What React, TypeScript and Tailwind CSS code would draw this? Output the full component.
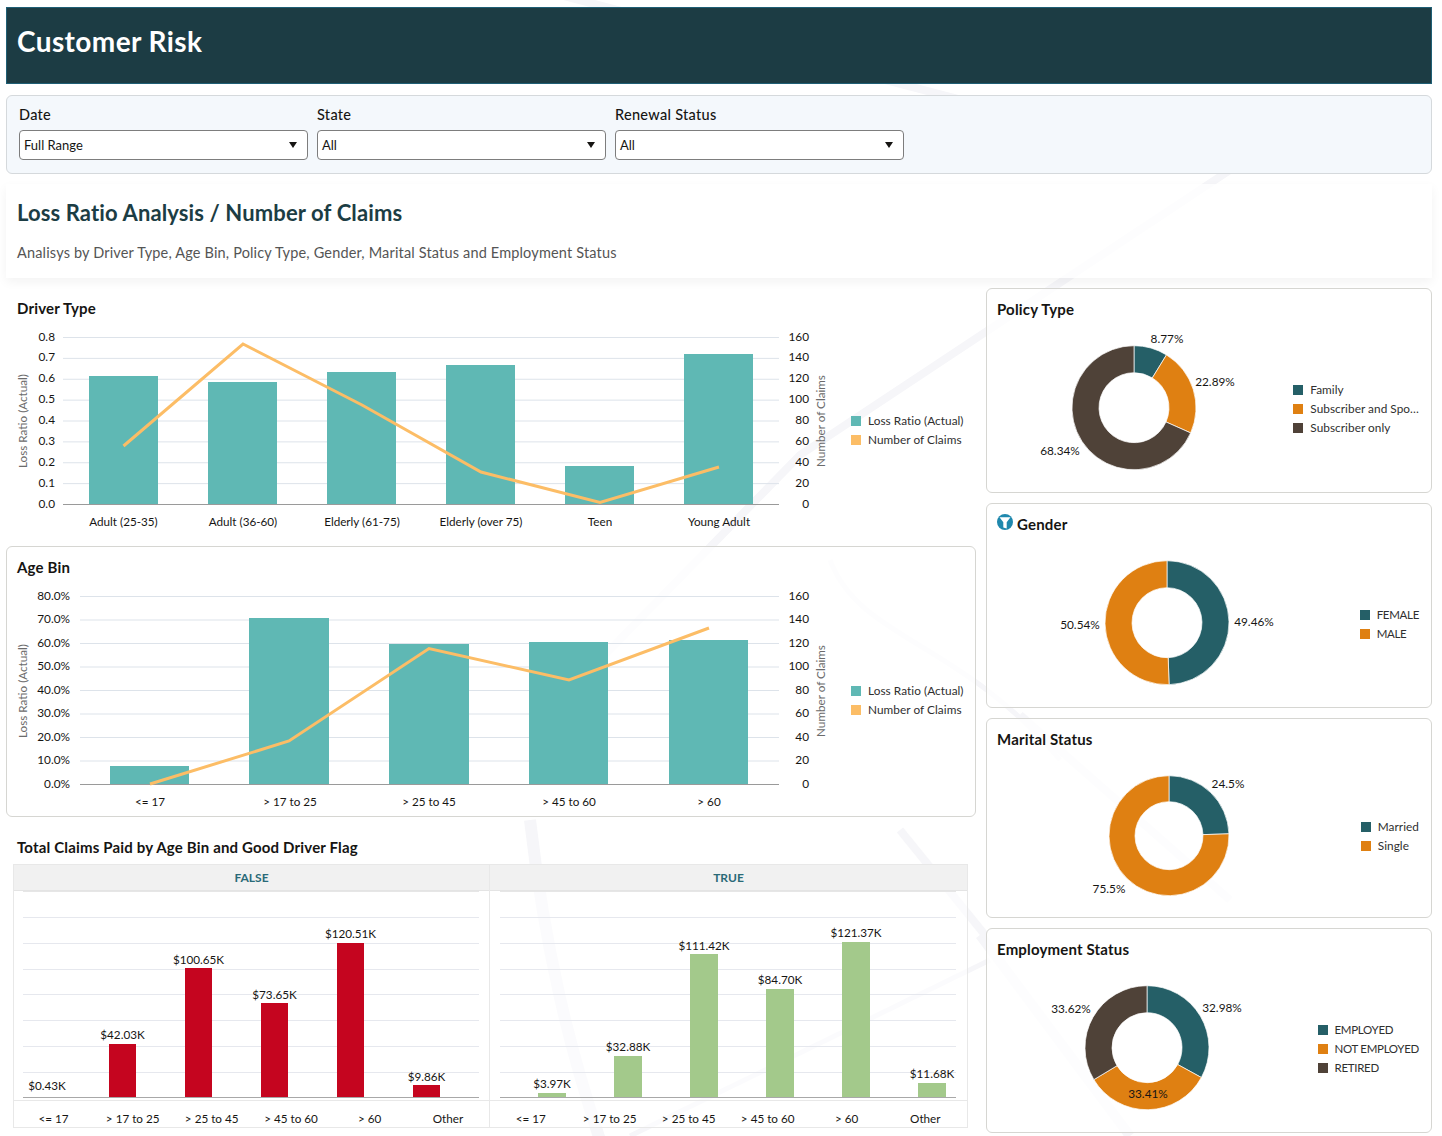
const TEAL = "#255f67";
const ORANGE = "#df8012";
const BROWN = "#4f4238";
const BAR = "#5fb8b4";
const LINE = "#fcbd66";

type Slice = { value: number; color: string };
type Lab = { text: string; x: number; y: number };
type LegendItem = { label: string; color: string };

function Legend({ items, caps }: { items: LegendItem[]; caps?: boolean }) {
  return (
    <div className="flex flex-col">
      {items.map((item) => (
        <div key={item.label} className="flex h-[19px] items-center gap-[7px] text-[#2f2f2f]">
          <span className="h-[10px] w-[10px] shrink-0" style={{ backgroundColor: item.color }} />
          <span className={caps ? "whitespace-nowrap text-[11.5px] tracking-[-0.3px]" : "whitespace-nowrap text-[11.8px] tracking-[0.05px]"}>
            {item.label}
          </span>
        </div>
      ))}
    </div>
  );
}

function Title({ children }: { children: React.ReactNode }) {
  return <h2 className="pb-[1px] text-[15px] font-bold leading-[18px] tracking-[0.17px] text-[#161513]">{children}</h2>;
}

function ComboChart(props: {
  top: number;
  height: number;
  axisLeft: number;
  yLabels: string[];
  yTop: number;
  yBottom: number;
  labelX: number;
  leftTitleY: number;
  rightTitleY: number;
  bars: { x: number; w: number; top: number }[];
  line: number[][];
  cats: { text: string; x: number }[];
  catY: number;
}) {
  const { top, height, axisLeft, yLabels, yTop, yBottom, labelX, bars, line, cats, catY } = props;
  const rightLabels = ["160", "140", "120", "100", "80", "60", "40", "20", "0"];
  const step = (yBottom - yTop) / 8;
  return (
    <svg viewBox={`6 ${top} 830 ${height}`} width={830} height={height} className="block shrink-0">
      {yLabels.map((l, i) => (
        <g key={l}>
          {i < 8 && <line x1={axisLeft} x2={779} y1={yTop + i * step} y2={yTop + i * step} stroke="#dde3ea" />}
          <text x={labelX} y={yTop + i * step + 3} textAnchor="end" className="fill-[#161513] text-[11.8px]">
            {l}
          </text>
          <text x={809} y={yTop + i * step + 3} textAnchor="end" className="fill-[#161513] text-[11.8px]">
            {rightLabels[i]}
          </text>
        </g>
      ))}
      {bars.map((b) => (
        <rect key={b.x} x={b.x} y={b.top} width={b.w} height={yBottom - b.top} fill={BAR} />
      ))}
      <line x1={axisLeft} x2={779} y1={yBottom} y2={yBottom} stroke="#9a9a9a" />
      <polyline points={line.map((p) => p.join(",")).join(" ")} fill="none" stroke={LINE} strokeWidth={3} />
      {cats.map((c) => (
        <text key={c.text} x={c.x} y={catY} textAnchor="middle" className="fill-[#161513] text-[11.7px]">
          {c.text}
        </text>
      ))}
      <text
        transform={`rotate(-90 27 ${props.leftTitleY})`}
        x={27}
        y={props.leftTitleY}
        textAnchor="middle"
        className="fill-[#6b6b6b] text-[11.7px]"
      >
        Loss Ratio (Actual)
      </text>
      <text
        transform={`rotate(-90 825 ${props.rightTitleY})`}
        x={825}
        y={props.rightTitleY}
        textAnchor="middle"
        className="fill-[#6b6b6b] text-[11.7px]"
      >
        Number of Claims
      </text>
    </svg>
  );
}

function Donut(props: {
  left: number;
  top: number;
  height: number;
  cx: number;
  cy: number;
  R: number;
  r: number;
  slices: Slice[];
  labels: Lab[];
}) {
  const { left, top, height, cx, cy, R, r, slices, labels } = props;
  let acc = 0;
  const pt = (rad: number, pct: number) => {
    const a = (pct / 100) * Math.PI * 2;
    return `${cx + rad * Math.sin(a)} ${cy - rad * Math.cos(a)}`;
  };
  return (
    <svg viewBox={`${left} ${top} 300 ${height}`} width={300} height={height} className="block shrink-0">
      {slices.map((s) => {
        const a = acc;
        acc += s.value;
        const large = s.value > 50 ? 1 : 0;
        const d = `M${pt(R, a)} A${R} ${R} 0 ${large} 1 ${pt(R, acc)} L${pt(r, acc)} A${r} ${r} 0 ${large} 0 ${pt(r, a)} Z`;
        return <path key={s.color} d={d} fill={s.color} stroke="#ffffff" strokeWidth={0.7} />;
      })}
      {labels.map((l) => (
        <text key={l.text} x={l.x} y={l.y + 4} textAnchor="middle" className="fill-[#161513] text-[11.8px]">
          {l.text}
        </text>
      ))}
    </svg>
  );
}

function DonutCard(props: {
  title: React.ReactNode;
  heightClass: string;
  legend: LegendItem[];
  caps?: boolean;
  chart: React.ReactNode;
}) {
  return (
    <section className={`flex flex-col rounded-md border border-[#d6d6d2] bg-white/80 ${props.heightClass}`}>
      <div className="flex h-[40px] shrink-0 items-center px-[10px]">{props.title}</div>
      <div className="flex items-center">
        {props.chart}
        <div className="ml-auto mr-[12px]">
          <Legend items={props.legend} caps={props.caps} />
        </div>
      </div>
    </section>
  );
}

function Trellis(props: {
  title: string;
  left: number;
  width: number;
  axis: number[];
  color: string;
  barW: number;
  bars: { x: number; top: number }[];
  values: Lab[];
  cats: { text: string; x: number }[];
  border?: boolean;
}) {
  const grid = [917.5, 943.5, 969.5, 994.5, 1020.5, 1046.5, 1072.5];
  return (
    <div className={props.border ? "border-r border-[#e8e8e8]" : ""}>
      <div className="flex h-[26px] items-center justify-center border-b border-[#e4e4e4] bg-[#f1f1f1] text-[12px] font-bold text-[#2a6a78]">
        {props.title}
      </div>
      <svg viewBox={`${props.left} 891 ${props.width} 236`} width={props.width} height={236} className="block">
        <line x1={props.axis[0]} x2={props.axis[1]} y1={891.5} y2={891.5} stroke="#e6e6e6" />
        {grid.map((y) => (
          <line key={y} x1={props.axis[0]} x2={props.axis[1]} y1={y} y2={y} stroke="#e6e8ee" />
        ))}
        {props.bars.map((b) => (
          <rect key={b.x} x={b.x} y={b.top} width={props.barW} height={1098 - b.top} fill={props.color} />
        ))}
        <line x1={props.axis[0]} x2={props.axis[1]} y1={1097.5} y2={1097.5} stroke="#a8a8a8" />
        <line x1={props.left} x2={props.left + props.width} y1={1100.5} y2={1100.5} stroke="#e8e8e8" />
        {props.values.map((v) => (
          <text key={v.text} x={v.x} y={v.y + 4} textAnchor="middle" className="fill-[#161513] text-[11.7px]">
            {v.text}
          </text>
        ))}
        {props.cats.map((c) => (
          <text key={c.text} x={c.x} y={1123} textAnchor="middle" className="fill-[#161513] text-[11.7px]">
            {c.text}
          </text>
        ))}
      </svg>
    </div>
  );
}

function FilterSelect({ label, value }: { label: string; value: string }) {
  return (
    <div className="w-[289px]">
      <div className="mb-[5px] h-[20px] text-[14.5px] font-medium leading-[20px] tracking-[0.3px] text-[#161513]">{label}</div>
      <div className="flex h-[30px] items-center justify-between rounded-[4px] border border-[#7d7d7d] bg-white pl-[4px] pr-[10px] text-[13px] text-[#161513]">
        <span className="pt-[2px]">{value}</span>
        <span className="h-0 w-0 border-x-[4.5px] border-t-[6px] border-x-transparent border-t-[#161513]" />
      </div>
    </div>
  );
}

const WATERMARK: [string, number][] = [
  ["M1230 170 L800 455 L590 670", 8],
  ["M560 -5 L1230 170", 8],
  ["M530 820 C 545 950 570 1050 600 1140", 12],
  ["M1020 715 L1230 900", 8],
  ["M980 935 L1130 1136", 10],
  ["M900 830 L985 935", 8],
  ["M630 1136 L990 960", 5],
  ["M830 560 C 860 640 960 640 1060 760", 5],
];

export default function App() {
  return (
    <div className="relative h-[1136px] w-[1442px] overflow-hidden bg-white font-[Lato,sans-serif] text-[#161513]">
      {/* faint background art */}
      <svg className="absolute left-0 top-0 h-[1136px] w-[1442px]" viewBox="0 0 1442 1136" aria-hidden="true">
        {WATERMARK.map(([d, w]) => (
          <path key={d} d={d} fill="none" stroke="#f6f6f9" strokeWidth={w} />
        ))}
      </svg>

      <div className="relative flex flex-col pl-[6px] pr-[10px] pt-[7px]">
        <header className="flex h-[77px] items-center border border-[#1f5f75] bg-[#1c3c44] px-[10px]">
          <h1 className="pb-[9px] text-[28px] font-bold leading-[34px] tracking-[0.4px] text-white">Customer Risk</h1>
        </header>

        <div className="mt-[11px] flex h-[79px] gap-[9px] rounded-md border border-[#d5d9dc] bg-[#f4f8fc] px-[12px] pt-[9px]">
          <FilterSelect label="Date" value="Full Range" />
          <FilterSelect label="State" value="All" />
          <FilterSelect label="Renewal Status" value="All" />
        </div>

        <section className="mt-[10px] flex h-[94px] flex-col bg-white/80 px-[11px] pt-[15px] shadow-[0_4px_10px_rgba(0,0,0,0.05)]">
          <h2 className="text-[22px] font-bold leading-[28px] tracking-[0.12px] text-[#1c3d44]">Loss Ratio Analysis / Number of Claims</h2>
          <p className="mt-[16px] text-[14.5px] leading-[20px] tracking-[0.165px] text-[#555555]">
            Analisys by Driver Type, Age Bin, Policy Type, Gender, Marital Status and Employment Status
          </p>
        </section>

        <div className="mt-[10px] grid grid-cols-[970px_446px] gap-x-[10px]">
          <div className="flex flex-col">
            <section className="h-[258px]">
              <div className="flex h-[41px] items-center px-[11px]">
                <Title>Driver Type</Title>
              </div>
              <div className="flex items-center">
                <ComboChart
                  top={329}
                  height={217}
                  axisLeft={63}
                  yLabels={["0.8", "0.7", "0.6", "0.5", "0.4", "0.3", "0.2", "0.1", "0.0"]}
                  yTop={337.5}
                  yBottom={504.5}
                  labelX={55}
                  leftTitleY={421}
                  rightTitleY={421}
                  bars={[
                    { x: 89, w: 69, top: 376 },
                    { x: 208, w: 69, top: 382 },
                    { x: 327, w: 69, top: 372 },
                    { x: 446, w: 69, top: 365 },
                    { x: 565, w: 69, top: 466 },
                    { x: 684, w: 69, top: 354 },
                  ]}
                  line={[
                    [123.5, 446],
                    [243, 344],
                    [362, 405],
                    [481, 472],
                    [600, 502.5],
                    [719, 467],
                  ]}
                  cats={[
                    { text: "Adult (25-35)", x: 123.5 },
                    { text: "Adult (36-60)", x: 243 },
                    { text: "Elderly (61-75)", x: 362 },
                    { text: "Elderly (over 75)", x: 481 },
                    { text: "Teen", x: 600 },
                    { text: "Young Adult", x: 719 },
                  ]}
                  catY={526}
                />
                <div className="mb-[15px] ml-[15px]">
                  <Legend
                    items={[
                      { label: "Loss Ratio (Actual)", color: BAR },
                      { label: "Number of Claims", color: LINE },
                    ]}
                  />
                </div>
              </div>
            </section>

            <section className="h-[271px] rounded-md border border-[#d6d6d2] bg-white/80">
              <div className="flex h-[40px] items-center px-[10px]">
                <Title>Age Bin</Title>
              </div>
              <div className="-ml-px flex items-center">
                <ComboChart
                  top={587}
                  height={228}
                  axisLeft={80}
                  yLabels={["80.0%", "70.0%", "60.0%", "50.0%", "40.0%", "30.0%", "20.0%", "10.0%", "0.0%"]}
                  yTop={596.5}
                  yBottom={784.5}
                  labelX={70}
                  leftTitleY={691}
                  rightTitleY={691}
                  bars={[
                    { x: 110, w: 79, top: 766 },
                    { x: 249, w: 80, top: 618 },
                    { x: 389, w: 80, top: 644 },
                    { x: 529, w: 79, top: 642 },
                    { x: 669, w: 79, top: 640 },
                  ]}
                  line={[
                    [150, 784],
                    [289, 741],
                    [429, 648.5],
                    [569, 680],
                    [709, 628],
                  ]}
                  cats={[
                    { text: "<= 17", x: 150 },
                    { text: "> 17 to 25", x: 290 },
                    { text: "> 25 to 45", x: 429 },
                    { text: "> 45 to 60", x: 569 },
                    { text: "> 60", x: 709 },
                  ]}
                  catY={806}
                />
                <div className="mb-[2px] ml-[15px]">
                  <Legend
                    items={[
                      { label: "Loss Ratio (Actual)", color: BAR },
                      { label: "Number of Claims", color: LINE },
                    ]}
                  />
                </div>
              </div>
            </section>

            <div className="flex h-[47px] items-end px-[11px] pb-[7px]">
              <Title>Total Claims Paid by Age Bin and Good Driver Flag</Title>
            </div>
            <div className="ml-[7px] grid w-[955px] grid-cols-[476px_477px] border border-[#e8e8e8] bg-white/60">
              <Trellis
                title="FALSE"
                border
                left={14}
                width={475}
                axis={[23, 479]}
                color="#c5051f"
                barW={27}
                bars={[
                  { x: 109, top: 1044 },
                  { x: 185, top: 968 },
                  { x: 261, top: 1003 },
                  { x: 337, top: 943 },
                  { x: 413, top: 1085 },
                ]}
                values={[
                  { text: "$0.43K", x: 47, y: 1086 },
                  { text: "$42.03K", x: 122.5, y: 1035 },
                  { text: "$100.65K", x: 198.5, y: 960 },
                  { text: "$73.65K", x: 274.5, y: 995 },
                  { text: "$120.51K", x: 350.5, y: 934 },
                  { text: "$9.86K", x: 426.5, y: 1077 },
                ]}
                cats={[
                  { text: "<= 17", x: 53.5 },
                  { text: "> 17 to 25", x: 132.7 },
                  { text: "> 25 to 45", x: 211.7 },
                  { text: "> 45 to 60", x: 291 },
                  { text: "> 60", x: 369.7 },
                  { text: "Other", x: 448 },
                ]}
              />
              <Trellis
                title="TRUE"
                left={490}
                width={477}
                axis={[500, 956]}
                color="#a3c98b"
                barW={28}
                bars={[
                  { x: 538, top: 1093 },
                  { x: 614, top: 1056 },
                  { x: 690, top: 954 },
                  { x: 766, top: 989 },
                  { x: 842, top: 942 },
                  { x: 918, top: 1083 },
                ]}
                values={[
                  { text: "$3.97K", x: 552, y: 1084 },
                  { text: "$32.88K", x: 628, y: 1047 },
                  { text: "$111.42K", x: 704, y: 946 },
                  { text: "$84.70K", x: 780, y: 980 },
                  { text: "$121.37K", x: 856, y: 933 },
                  { text: "$11.68K", x: 932, y: 1074 },
                ]}
                cats={[
                  { text: "<= 17", x: 530.7 },
                  { text: "> 17 to 25", x: 609.7 },
                  { text: "> 25 to 45", x: 688.7 },
                  { text: "> 45 to 60", x: 767.7 },
                  { text: "> 60", x: 846.7 },
                  { text: "Other", x: 925.3 },
                ]}
              />
            </div>
          </div>

          <div className="flex flex-col gap-[10px]">
            <DonutCard
              title={<Title>Policy Type</Title>}
              heightClass="h-[205px]"
              legend={[
                { label: "Family", color: TEAL },
                { label: "Subscriber and Spo…", color: ORANGE },
                { label: "Subscriber only", color: BROWN },
              ]}
              chart={
                <Donut
                  left={987}
                  top={329}
                  height={160}
                  cx={1134}
                  cy={407.7}
                  R={62}
                  r={35}
                  slices={[
                    { value: 8.77, color: TEAL },
                    { value: 22.89, color: ORANGE },
                    { value: 68.34, color: BROWN },
                  ]}
                  labels={[
                    { text: "8.77%", x: 1167, y: 339 },
                    { text: "22.89%", x: 1215, y: 382 },
                    { text: "68.34%", x: 1060, y: 451 },
                  ]}
                />
              }
            />
            <DonutCard
              title={
                <div className="flex items-center gap-[4px]">
                  <svg viewBox="0 0 16 16" className="-mt-[4px] h-[16px] w-[16px]" aria-hidden="true">
                    <circle cx="8" cy="8" r="8" fill="#1f88ad" />
                    <path d="M2.5 3.2 H13.5 L9.7 8.2 V14.5 L6.3 13.5 V8.2 Z" fill="#ffffff" />
                  </svg>
                  <Title>Gender</Title>
                </div>
              }
              heightClass="h-[205px]"
              caps
              legend={[
                { label: "FEMALE", color: TEAL },
                { label: "MALE", color: ORANGE },
              ]}
              chart={
                <Donut
                  left={987}
                  top={544}
                  height={161}
                  cx={1167}
                  cy={622.7}
                  R={62}
                  r={35}
                  slices={[
                    { value: 49.46, color: TEAL },
                    { value: 50.54, color: ORANGE },
                  ]}
                  labels={[
                    { text: "49.46%", x: 1254, y: 622 },
                    { text: "50.54%", x: 1080, y: 625 },
                  ]}
                />
              }
            />
            <DonutCard
              title={<Title>Marital Status</Title>}
              heightClass="h-[200px]"
              legend={[
                { label: "Married", color: TEAL },
                { label: "Single", color: ORANGE },
              ]}
              chart={
                <Donut
                  left={987}
                  top={759}
                  height={155}
                  cx={1169}
                  cy={835.7}
                  R={60}
                  r={34}
                  slices={[
                    { value: 24.5, color: TEAL },
                    { value: 75.5, color: ORANGE },
                  ]}
                  labels={[
                    { text: "24.5%", x: 1228, y: 784 },
                    { text: "75.5%", x: 1109, y: 889 },
                  ]}
                />
              }
            />
            <DonutCard
              title={<Title>Employment Status</Title>}
              heightClass="h-[205px]"
              caps
              legend={[
                { label: "EMPLOYED", color: TEAL },
                { label: "NOT EMPLOYED", color: ORANGE },
                { label: "RETIRED", color: BROWN },
              ]}
              chart={
                <Donut
                  left={987}
                  top={969}
                  height={160}
                  cx={1147}
                  cy={1047.7}
                  R={62}
                  r={35}
                  slices={[
                    { value: 32.98, color: TEAL },
                    { value: 33.41, color: ORANGE },
                    { value: 33.62, color: BROWN },
                  ]}
                  labels={[
                    { text: "32.98%", x: 1222, y: 1008 },
                    { text: "33.41%", x: 1148, y: 1094 },
                    { text: "33.62%", x: 1071, y: 1009 },
                  ]}
                />
              }
            />
          </div>
        </div>
      </div>
    </div>
  );
}
